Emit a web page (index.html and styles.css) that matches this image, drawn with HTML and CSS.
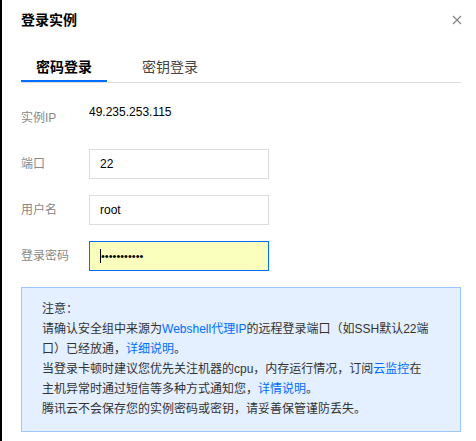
FILE: index.html
```html
<!DOCTYPE html>
<html lang="zh-CN">
<head>
<meta charset="utf-8">
<title>登录实例</title>
<link rel="stylesheet" href="styles.css">
</head>
<body>
<div class="dialog">
  <div class="dialog-header">
    <h2 class="dialog-title">登录实例</h2>
    <button class="dialog-close" aria-label="关闭">
      <svg width="10" height="10" viewBox="0 0 10 10"><path d="M1 1L9 9M9 1L1 9" stroke="#888" stroke-width="1.3" fill="none"/></svg>
    </button>
  </div>
  <div class="tabs">
    <div class="tab active">密码登录</div>
    <div class="tab">密钥登录</div>
  </div>
  <div class="form">
    <div class="row row-top">
      <label class="label">实例IP</label>
      <div class="value">49.235.253.115</div>
    </div>
    <div class="row">
      <label class="label">端口</label>
      <input class="field" type="text" value="22">
    </div>
    <div class="row">
      <label class="label">用户名</label>
      <input class="field" type="text" value="root">
    </div>
    <div class="row">
      <label class="label">登录密码</label>
      <div class="field field-focus"><span class="caret"></span><span class="dots">•••••••••••</span></div>
    </div>
  </div>
  <div class="notice">
    <p>注意：</p>
    <p>请确认安全组中来源为<a href="#">Webshell代理IP</a>的远程登录端口（如SSH默认22端口）已经放通，<a href="#">详细说明</a>。</p>
    <p>当登录卡顿时建议您优先关注机器的cpu，内存运行情况，订阅<a href="#">云监控</a>在主机异常时通过短信等多种方式通知您，<a href="#">详情说明</a>。</p>
    <p>腾讯云不会保存您的实例密码或密钥，请妥善保管谨防丢失。</p>
  </div>
</div>
</body>
</html>
```
FILE: styles.css
```css
* { box-sizing: border-box; }
html, body { margin: 0; padding: 0; background: #fff; }
body {
  font-family: "Liberation Sans", Arial, "Noto Sans CJK SC", sans-serif;
  font-size: 12px;
  color: #000;
}
.dialog {
  width: 476px;
  height: 441px;
  border-left: 2px solid #000;
  padding: 0 15px 0 19px;
  background: #fff;
}
.dialog-header {
  display: flex;
  align-items: center;
  justify-content: space-between;
  height: 38px;
  padding-top: 1px;
}
.dialog-title {
  margin: 0;
  font-size: 14px;
  font-weight: bold;
  line-height: 20px;
  color: #000;
}
.dialog-close {
  border: 0;
  background: none;
  padding: 0;
  width: 10px;
  height: 10px;
  margin-right: -1px;
  display: flex;
}
.tabs {
  display: flex;
  margin-top: 19px;
  border-bottom: 1px solid #dddddd;
}
.tab {
  font-size: 14px;
  line-height: 20px;
  padding: 0 15px 3px;
  margin-right: 20px;
  color: #444;
  border-bottom: 2px solid transparent;
}
.tab.active {
  font-weight: bold;
  color: #000;
  border-bottom-color: #006eff;
}
.form {
  display: flex;
  flex-direction: column;
  gap: 16px;
  margin-top: 20px;
}
.row {
  display: flex;
  align-items: center;
  height: 30px;
}
.row-top { align-items: flex-start; }
.label {
  width: 68px;
  color: #888;
  line-height: 30px;
}
.value {
  line-height: 18px;
  color: #000;
}
.field {
  width: 180px;
  height: 30px;
  border: 1px solid #dddddd;
  padding: 0 10px;
  font-family: "Liberation Sans", Arial, sans-serif;
  font-size: 12px;
  color: #000;
  background: #fff;
  outline: none;
  margin: 0;
}
.field-focus {
  display: flex;
  align-items: center;
  background: #faffbd;
  border-color: #006eff;
}
.caret {
  display: inline-block;
  width: 1px;
  height: 14px;
  background: #000;
}
.dots {
  font-family: "Liberation Sans", Arial, sans-serif;
  font-size: 11px;
  line-height: 14px;
  color: #000;
}
.notice {
  margin-top: 16px;
  background: #e4efff;
  border: 1px solid #9cc8ff;
  padding: 11px 30px 12px 20px;
  color: #333;
  line-height: 20px;
}
.notice p { margin: 0; }
.notice a { color: #006eff; text-decoration: none; }
```
